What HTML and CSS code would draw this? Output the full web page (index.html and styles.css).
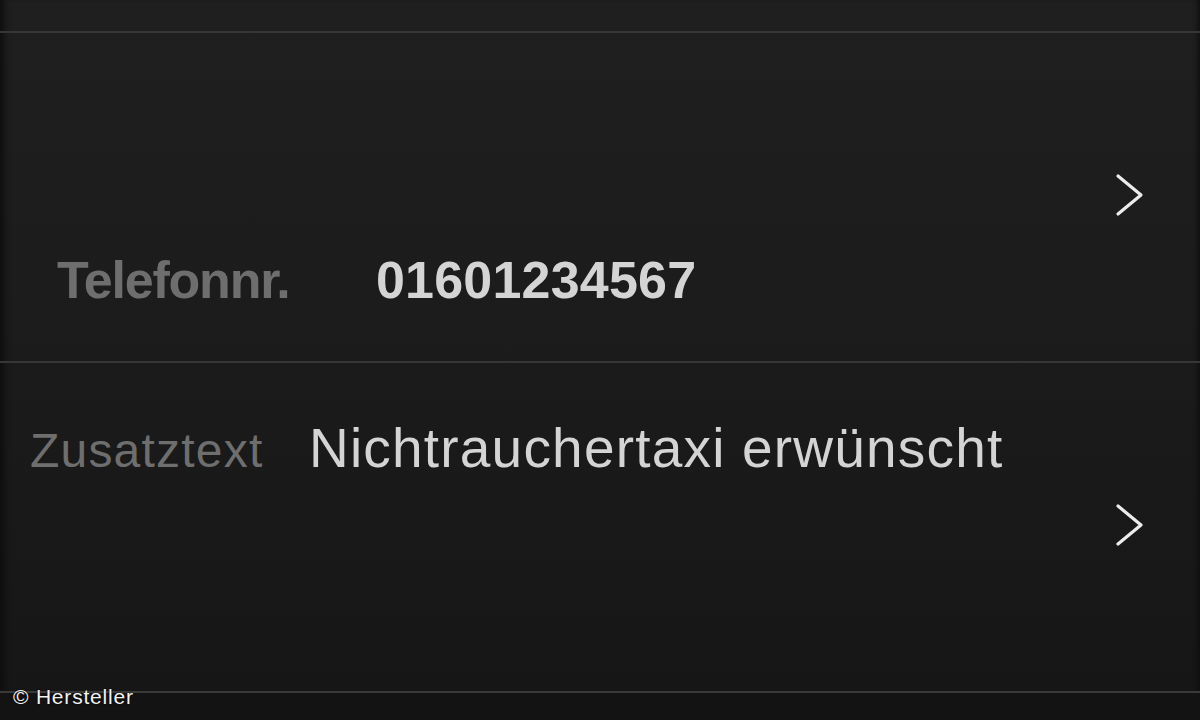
FILE: index.html
```html
<!DOCTYPE html>
<html lang="de">
<head>
<meta charset="utf-8">
<title>Taxi</title>
<link rel="stylesheet" href="styles.css">
</head>
<body>
<div class="screen">
  <div class="top-gap"></div>
  <div class="row row-phone">
    <div class="fields">
      <span class="label label-bold">Telefonnr.</span>
      <span class="value value-bold">01601234567</span>
    </div>
    <svg class="chevron" width="31" height="44" viewBox="0 0 31 44"><polyline points="4,3 27,22 4,41" fill="none" stroke="#ececec" stroke-width="3.2" stroke-linecap="round" stroke-linejoin="round"/></svg>
  </div>
  <div class="row row-note">
    <div class="fields">
      <span class="label label-reg">Zusatztext</span>
      <span class="value value-reg">Nichtraucher­taxi erwünscht</span>
    </div>
    <svg class="chevron" width="31" height="44" viewBox="0 0 31 44"><polyline points="4,3 27,22 4,41" fill="none" stroke="#ececec" stroke-width="3.2" stroke-linecap="round" stroke-linejoin="round"/></svg>
  </div>
  <div class="row-rest"></div>
  <div class="credit">© Hersteller</div>
</div>
</body>
</html>
```
FILE: styles.css
```css
html, body {
  margin: 0;
  padding: 0;
}
body {
  background: #141415;
  font-family: "Liberation Sans", Arial, sans-serif;
}
.screen {
  width: 1200px;
  height: 720px;
  overflow: hidden;
  position: relative;
  background: linear-gradient(180deg, #1f1f20 0%, #1c1c1d 40%, #161617 100%);
  box-shadow: inset 9px 0 6px -5px #0e0e0f, inset -6px 0 5px -4px #0e0e0f;
  display: flex;
  flex-direction: column;
}
.top-gap {
  height: 31px;
  flex: none;
}
.row {
  flex: none;
  height: 328px;
  border-top: 2px solid #363637;
  display: flex;
  align-items: flex-start;
  justify-content: space-between;
  padding-right: 55px;
  box-sizing: content-box;
}
.row-rest {
  flex: 1;
  border-top: 2px solid #3a3a3b;
  background: #131314;
}
.fields {
  display: flex;
  align-items: baseline;
  line-height: 1;
}
.row-phone .fields {
  margin-top: 221px;
  padding-left: 57px;
}
.row-note .fields {
  margin-top: 58px;
  padding-left: 30px;
}
.label {
  color: #6e6e6f;
}
.value {
  color: #d4d4d5;
}
.label-bold {
  font-size: 52px;
  font-weight: bold;
  letter-spacing: -1.2px;
  width: 319px;
}
.value-bold {
  font-size: 52px;
  font-weight: bold;
  letter-spacing: 0.2px;
}
.label-reg {
  font-size: 48px;
  letter-spacing: 1.2px;
  width: 279px;
}
.value-reg {
  font-size: 55px;
  letter-spacing: 1.2px;
}
.chevron {
  flex: none;
  margin-top: 140px;
  display: block;
}
.credit {
  position: absolute;
  left: 13px;
  top: 685px;
  font-size: 21px;
  letter-spacing: 0.8px;
  color: #f2f2f2;
  text-shadow: 0 0 2px #000;
}
```
